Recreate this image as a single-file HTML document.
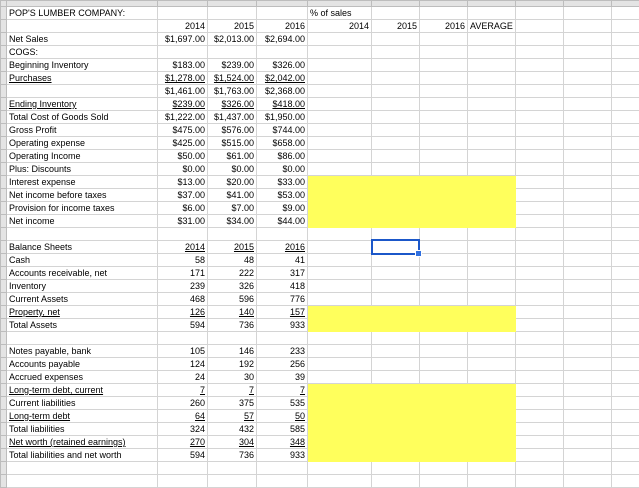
<!DOCTYPE html>
<html><head><meta charset="utf-8"><style>
html,body{margin:0;padding:0;background:#fff;width:639px;height:481px;overflow:hidden}
table{border-collapse:collapse;table-layout:fixed;width:639px;font-family:"Liberation Sans",sans-serif;font-size:9px;color:#000;position:absolute;left:0;top:0}
td{border:1px solid #d4d4d4;height:12px;padding:0 2px;white-space:nowrap;overflow:hidden;line-height:12px}
tr.h td{height:5px;background:#e4e4e4;border-color:#bdbdbd;padding:0}
td.r{text-align:right}
td.n{background:#e4e4e4;border-color:#bdbdbd;padding:0}
td.y{background:#ffff5c;border-color:#ffff5c}
u{text-decoration:underline}
.sel{position:absolute;left:371px;top:239px;width:45px;height:12px;border:2px solid #1b57c9}
.hd{position:absolute;left:415px;top:250px;width:5px;height:5px;background:#2f6fe0;border:1px solid #fff}
</style></head><body>
<table>
<colgroup><col style="width:6px"><col style="width:151px"><col style="width:50px"><col style="width:49px"><col style="width:51px"><col style="width:64px"><col style="width:48px"><col style="width:48px"><col style="width:48px"><col style="width:48px"><col style="width:48px"><col style="width:28px"></colgroup>
<tr class="h"><td></td><td></td><td></td><td></td><td></td><td></td><td></td><td></td><td></td><td></td><td></td><td></td></tr>
<tr><td class="n"></td><td>POP'S LUMBER COMPANY:</td><td></td><td></td><td></td><td>% of sales</td><td></td><td></td><td></td><td></td><td></td><td></td></tr>
<tr><td class="n"></td><td></td><td class="r">2014</td><td class="r">2015</td><td class="r">2016</td><td class="r">2014</td><td class="r">2015</td><td class="r">2016</td><td>AVERAGE</td><td></td><td></td><td></td></tr>
<tr><td class="n"></td><td>Net Sales</td><td class="r">$1,697.00</td><td class="r">$2,013.00</td><td class="r">$2,694.00</td><td></td><td></td><td></td><td></td><td></td><td></td><td></td></tr>
<tr><td class="n"></td><td>COGS:</td><td></td><td></td><td></td><td></td><td></td><td></td><td></td><td></td><td></td><td></td></tr>
<tr><td class="n"></td><td>Beginning Inventory</td><td class="r">$183.00</td><td class="r">$239.00</td><td class="r">$326.00</td><td></td><td></td><td></td><td></td><td></td><td></td><td></td></tr>
<tr><td class="n"></td><td><u>Purchases</u></td><td class="r"><u>$1,278.00</u></td><td class="r"><u>$1,524.00</u></td><td class="r"><u>$2,042.00</u></td><td></td><td></td><td></td><td></td><td></td><td></td><td></td></tr>
<tr><td class="n"></td><td></td><td class="r">$1,461.00</td><td class="r">$1,763.00</td><td class="r">$2,368.00</td><td></td><td></td><td></td><td></td><td></td><td></td><td></td></tr>
<tr><td class="n"></td><td><u>Ending Inventory</u></td><td class="r"><u>$239.00</u></td><td class="r"><u>$326.00</u></td><td class="r"><u>$418.00</u></td><td></td><td></td><td></td><td></td><td></td><td></td><td></td></tr>
<tr><td class="n"></td><td>Total Cost of Goods Sold</td><td class="r">$1,222.00</td><td class="r">$1,437.00</td><td class="r">$1,950.00</td><td></td><td></td><td></td><td></td><td></td><td></td><td></td></tr>
<tr><td class="n"></td><td>Gross Profit</td><td class="r">$475.00</td><td class="r">$576.00</td><td class="r">$744.00</td><td></td><td></td><td></td><td></td><td></td><td></td><td></td></tr>
<tr><td class="n"></td><td>Operating expense</td><td class="r">$425.00</td><td class="r">$515.00</td><td class="r">$658.00</td><td></td><td></td><td></td><td></td><td></td><td></td><td></td></tr>
<tr><td class="n"></td><td>Operating Income</td><td class="r">$50.00</td><td class="r">$61.00</td><td class="r">$86.00</td><td></td><td></td><td></td><td></td><td></td><td></td><td></td></tr>
<tr><td class="n"></td><td>Plus: Discounts</td><td class="r">$0.00</td><td class="r">$0.00</td><td class="r">$0.00</td><td></td><td></td><td></td><td></td><td></td><td></td><td></td></tr>
<tr><td class="n"></td><td>Interest expense</td><td class="r">$13.00</td><td class="r">$20.00</td><td class="r">$33.00</td><td class="y"></td><td class="y"></td><td class="y"></td><td class="y"></td><td></td><td></td><td></td></tr>
<tr><td class="n"></td><td>Net income before taxes</td><td class="r">$37.00</td><td class="r">$41.00</td><td class="r">$53.00</td><td class="y"></td><td class="y"></td><td class="y"></td><td class="y"></td><td></td><td></td><td></td></tr>
<tr><td class="n"></td><td>Provision for income taxes</td><td class="r">$6.00</td><td class="r">$7.00</td><td class="r">$9.00</td><td class="y"></td><td class="y"></td><td class="y"></td><td class="y"></td><td></td><td></td><td></td></tr>
<tr><td class="n"></td><td>Net income</td><td class="r">$31.00</td><td class="r">$34.00</td><td class="r">$44.00</td><td class="y"></td><td class="y"></td><td class="y"></td><td class="y"></td><td></td><td></td><td></td></tr>
<tr><td class="n"></td><td></td><td></td><td></td><td></td><td></td><td></td><td></td><td></td><td></td><td></td><td></td></tr>
<tr><td class="n"></td><td>Balance Sheets</td><td class="r"><u>2014</u></td><td class="r"><u>2015</u></td><td class="r"><u>2016</u></td><td></td><td></td><td></td><td></td><td></td><td></td><td></td></tr>
<tr><td class="n"></td><td>Cash</td><td class="r">58</td><td class="r">48</td><td class="r">41</td><td></td><td></td><td></td><td></td><td></td><td></td><td></td></tr>
<tr><td class="n"></td><td>Accounts receivable, net</td><td class="r">171</td><td class="r">222</td><td class="r">317</td><td></td><td></td><td></td><td></td><td></td><td></td><td></td></tr>
<tr><td class="n"></td><td>Inventory</td><td class="r">239</td><td class="r">326</td><td class="r">418</td><td></td><td></td><td></td><td></td><td></td><td></td><td></td></tr>
<tr><td class="n"></td><td>Current Assets</td><td class="r">468</td><td class="r">596</td><td class="r">776</td><td></td><td></td><td></td><td></td><td></td><td></td><td></td></tr>
<tr><td class="n"></td><td><u>Property, net</u></td><td class="r"><u>126</u></td><td class="r"><u>140</u></td><td class="r"><u>157</u></td><td class="y"></td><td class="y"></td><td class="y"></td><td class="y"></td><td></td><td></td><td></td></tr>
<tr><td class="n"></td><td>Total Assets</td><td class="r">594</td><td class="r">736</td><td class="r">933</td><td class="y"></td><td class="y"></td><td class="y"></td><td class="y"></td><td></td><td></td><td></td></tr>
<tr><td class="n"></td><td></td><td></td><td></td><td></td><td></td><td></td><td></td><td></td><td></td><td></td><td></td></tr>
<tr><td class="n"></td><td>Notes payable, bank</td><td class="r">105</td><td class="r">146</td><td class="r">233</td><td></td><td></td><td></td><td></td><td></td><td></td><td></td></tr>
<tr><td class="n"></td><td>Accounts payable</td><td class="r">124</td><td class="r">192</td><td class="r">256</td><td></td><td></td><td></td><td></td><td></td><td></td><td></td></tr>
<tr><td class="n"></td><td>Accrued expenses</td><td class="r">24</td><td class="r">30</td><td class="r">39</td><td></td><td></td><td></td><td></td><td></td><td></td><td></td></tr>
<tr><td class="n"></td><td><u>Long-term debt, current</u></td><td class="r"><u>7</u></td><td class="r"><u>7</u></td><td class="r"><u>7</u></td><td class="y"></td><td class="y"></td><td class="y"></td><td class="y"></td><td></td><td></td><td></td></tr>
<tr><td class="n"></td><td>Current liabilities</td><td class="r">260</td><td class="r">375</td><td class="r">535</td><td class="y"></td><td class="y"></td><td class="y"></td><td class="y"></td><td></td><td></td><td></td></tr>
<tr><td class="n"></td><td><u>Long-term debt</u></td><td class="r"><u>64</u></td><td class="r"><u>57</u></td><td class="r"><u>50</u></td><td class="y"></td><td class="y"></td><td class="y"></td><td class="y"></td><td></td><td></td><td></td></tr>
<tr><td class="n"></td><td>Total liabilities</td><td class="r">324</td><td class="r">432</td><td class="r">585</td><td class="y"></td><td class="y"></td><td class="y"></td><td class="y"></td><td></td><td></td><td></td></tr>
<tr><td class="n"></td><td><u>Net worth (retained earnings)</u></td><td class="r"><u>270</u></td><td class="r"><u>304</u></td><td class="r"><u>348</u></td><td class="y"></td><td class="y"></td><td class="y"></td><td class="y"></td><td></td><td></td><td></td></tr>
<tr><td class="n"></td><td>Total liabilities and net worth</td><td class="r">594</td><td class="r">736</td><td class="r">933</td><td class="y"></td><td class="y"></td><td class="y"></td><td class="y"></td><td></td><td></td><td></td></tr>
<tr><td class="n"></td><td></td><td></td><td></td><td></td><td></td><td></td><td></td><td></td><td></td><td></td><td></td></tr>
<tr><td class="n"></td><td></td><td></td><td></td><td></td><td></td><td></td><td></td><td></td><td></td><td></td><td></td></tr>
</table>
<div class="sel"></div><div class="hd"></div>
</body></html>
